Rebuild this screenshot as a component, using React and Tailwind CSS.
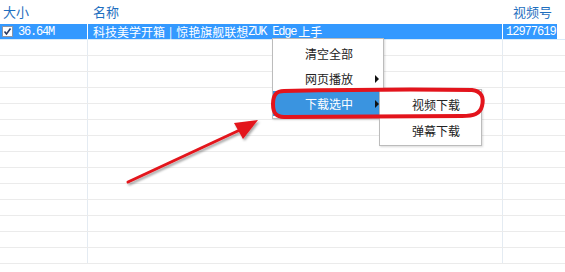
const cjk = { fontFamily: '"Noto Sans CJK SC", sans-serif' };

const emptyRows = Array.from({ length: 14 }, (_, i) => i);

function Checkbox() {
  return (
    <span className="flex h-[11px] w-[11px] items-center justify-center border border-[#8a96a8] bg-white">
      <svg width="9" height="9" viewBox="0 0 9 9">
        <path d="M1.5 4.5 L3.5 7 L7.5 1.5" fill="none" stroke="#2a3a60" strokeWidth="1.6" />
      </svg>
    </span>
  );
}

function MenuItem({ label, active, hasSub }) {
  return (
    <div
      className={`relative flex h-[25px] items-center pl-[32px] text-[12px] ${
        active ? 'bg-[#3a94e0] text-white' : 'text-[#222]'
      }`}
    >
      {label}
      {hasSub && (
        <span className="absolute right-[4px] top-[9px] h-0 w-0 border-y-[4px] border-l-[4px] border-y-transparent border-l-[#111]"></span>
      )}
    </div>
  );
}

export default function App() {
  return (
    <div className="relative h-[272px] w-[565px] overflow-hidden bg-white" style={cjk}>
      {/* header */}
      <div className="flex h-[24px] items-center text-[13px] text-[#1f6fc0]">
        <div className="w-[88px] pl-[3px]">大小</div>
        <div className="w-[415px] pl-[5px]">名称</div>
        <div className="pl-[10px]">视频号</div>
      </div>

      {/* selected row */}
      <div className="flex h-[16px] border-b border-[#d7eaf8] text-[12px] text-white">
        <div className="flex w-[88px] items-center gap-[5px] border-r border-white bg-[#3399ff] pl-[2px]">
          <Checkbox />
          <span className="tracking-[-1.2px]" style={{ fontFamily: '"Liberation Mono", monospace' }}>36.64M</span>
        </div>
        <div className="flex w-[415px] items-center whitespace-nowrap border-r border-white bg-[#3399ff] pl-[5px] leading-none">
          <span>科技美学开箱</span>
          <span className="px-[4px]">|</span>
          <span>惊艳旗舰联想</span>
          <span className="tracking-[-1.2px]" style={{ fontFamily: '"Liberation Mono", monospace' }}>ZUK Edge</span>
          <span className="pl-[2px]">上手</span>
        </div>
        <div className="flex w-[54px] items-center bg-[#3399ff] pl-[3px]">
          <span className="tracking-[-1px]" style={{ fontFamily: '"Liberation Mono", monospace' }}>12977619</span>
        </div>
      </div>

      {/* empty rows */}
      {emptyRows.map((i) => (
        <div key={i} className="flex h-[16px] border-b border-[#ebebeb]">
          <div className="w-[88px] border-r border-[#e4ebf2]"></div>
          <div className="w-[415px] border-r border-[#e4ebf2]"></div>
          <div className="flex-1"></div>
        </div>
      ))}

      {/* context menu */}
      <div className="absolute left-[272px] top-[38px] w-[112px] border border-[#bcbcbc] bg-white py-[2px] shadow-[1px_1px_2px_rgba(0,0,0,0.15)]">
        <MenuItem label="清空全部" />
        <MenuItem label="网页播放" hasSub />
        <MenuItem label="下载选中" active hasSub />
      </div>

      {/* submenu */}
      <div className="absolute left-[379px] top-[89px] w-[103px] border border-[#bcbcbc] bg-white py-[1px] shadow-[1px_1px_2px_rgba(0,0,0,0.15)]">
        <div className="flex h-[27px] items-center pl-[32px] text-[12px] text-[#222]">视频下载</div>
        <div className="flex h-[26px] items-center pl-[32px] text-[12px] text-[#222]">弹幕下载</div>
      </div>

      {/* annotation: red outline and arrow */}
      <svg className="pointer-events-none absolute left-0 top-0" width="565" height="272" viewBox="0 0 565 272">
        <defs>
          <filter id="sh" x="-20%" y="-20%" width="140%" height="140%">
            <feDropShadow dx="1.5" dy="2" stdDeviation="1.2" floodColor="#000" floodOpacity="0.35" />
          </filter>
        </defs>
        <path
          d="M284 91 C330 90 420 89 472 90 C482 91 484 98 482 106 C480 114 474 116 462 116 L284 117 C276 117 273 113 273 104 C273 95 276 91 284 91 Z"
          fill="none"
          stroke="#e3141c"
          strokeWidth="4"
        />
        <g filter="url(#sh)">
          <line x1="128" y1="182" x2="242" y2="129" stroke="#e3141c" strokeWidth="3" strokeLinecap="round" />
          <polygon points="258,120 234,123 243,139" fill="#e3141c" />
        </g>
      </svg>
    </div>
  );
}
